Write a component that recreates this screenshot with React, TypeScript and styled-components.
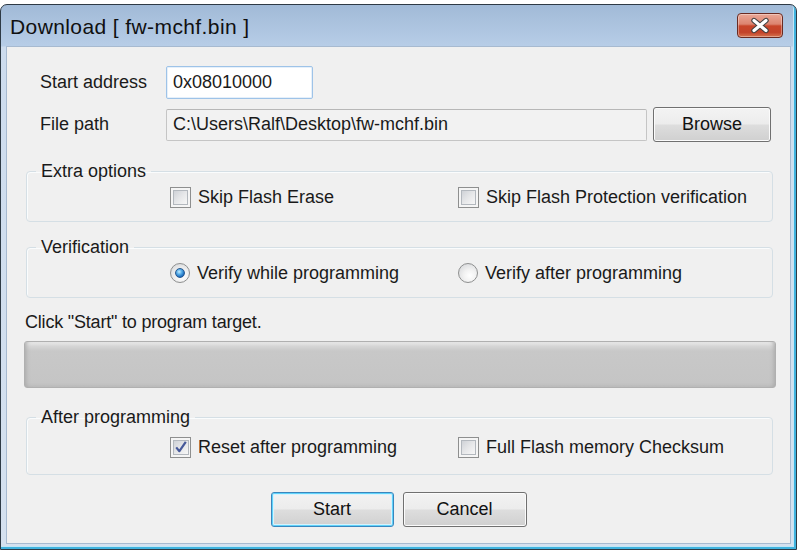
import React from "react";
import styled, { createGlobalStyle, css } from "styled-components";

const Global = createGlobalStyle`
  html, body { margin: 0; padding: 0; background: #ffffff; }
  body { font-family: "Liberation Sans", Arial, sans-serif; color: #1a1a1a; }
  * { box-sizing: border-box; }
`;

const Stage = styled.div`
  width: 800px;
  height: 551px;
  padding: 4px 3px 1px 0;
  display: flex;
`;

const Window = styled.div`
  flex: 1;
  display: flex;
  flex-direction: column;
  border: 1px solid #2e3a45;
  border-radius: 7px 7px 0 0;
  background: linear-gradient(180deg, #a1bad7 0px, #b7cde7 41px, #cddcee 42px, #d5e1ef 100%);
  box-shadow: inset -2px -2px 0 #3fb2de, inset -3px -3px 0 #c3e6f5;
  padding: 0 5px 5px 5px;
`;

const TitleBar = styled.div`
  height: 41px;
  display: flex;
  align-items: center;
  justify-content: space-between;
  padding: 3px 8px 0 4px;
`;

const TitleText = styled.div`
  font-size: 21px;
  color: #101010;
  letter-spacing: 0.4px;
`;

const CloseButton = styled.div`
  width: 46px;
  height: 25px;
  margin-top: -3px;
  border: 1px solid #6a2b22;
  border-radius: 4px;
  background: linear-gradient(180deg, #eaa796 0%, #dc8470 44%, #c8452a 52%, #c3432a 80%, #d6744f 100%);
  box-shadow: inset 0 0 0 1px rgba(255, 255, 255, 0.35);
  display: flex;
  align-items: center;
  justify-content: center;
`;

const Panel = styled.div`
  flex: 1;
  display: flex;
  flex-direction: column;
  background: #f0f0f0;
  border: 1px solid #a7bad0;
  padding-top: 19px;
`;

const FormRow = styled.div<{ $mt?: number }>`
  display: flex;
  align-items: center;
  padding-left: 33px;
  margin-top: ${(p) => p.$mt ?? 0}px;
  height: ${(p) => (p.$mt ? 35 : 33)}px;
`;

const FieldLabel = styled.div`
  width: 126px;
  font-size: 18px;
`;

const TextInput = styled.div<{ $readOnly?: boolean; $width: number }>`
  width: ${(p) => p.$width}px;
  height: ${(p) => (p.$readOnly ? 32 : 33)}px;
  border-radius: 2px;
  font-size: 18px;
  padding-left: 6px;
  display: flex;
  align-items: center;
  white-space: nowrap;
  ${(p) =>
    p.$readOnly
      ? css`
          background: #f2f2f2;
          border: 1px solid #c5c5c5;
          border-top-color: #b7b7b7;
        `
      : css`
          background: #ffffff;
          border: 1px solid #9ec3e8;
          box-shadow: inset 0 0 0 1px #e6f0fa;
        `}
`;

const PushButton = styled.div<{ $width: number; $default?: boolean }>`
  width: ${(p) => p.$width}px;
  height: 35px;
  border: 1px solid ${(p) => (p.$default ? "#3a86bd" : "#707070")};
  border-radius: 3px;
  background: linear-gradient(180deg, #f3f3f3 0%, #ececec 48%, #dddddd 52%, #d0d0d0 100%);
  box-shadow: ${(p) =>
    p.$default ? "inset 0 0 0 1px #5fd3fb, inset 0 0 0 2px #d7f2fd" : "inset 0 0 0 1px #fbfbfb"};
  font-size: 18px;
  color: #111;
  display: flex;
  align-items: center;
  justify-content: center;
`;

const BrowseButton = styled(PushButton)`
  margin-left: 6px;
`;

const Group = styled.fieldset<{ $pt: number; $pb: number; $mt: number }>`
  margin: ${(p) => p.$mt}px 17px 0 19px;
  padding: ${(p) => p.$pt}px 0 ${(p) => p.$pb}px 0;
  border: 1px solid #d5dfe5;
  border-radius: 4px;
  box-shadow: inset 1px 1px 0 #fafcfd;
  min-width: 0;
`;

const GroupLegend = styled.legend`
  margin-left: 9px;
  padding: 0 5px;
  font-size: 18px;
  line-height: 18px;
  color: #1a1a1a;
`;

const OptionGrid = styled.div`
  display: grid;
  grid-template-columns: 288px auto;
  padding-left: 143px;
  height: 22px;
  align-items: center;
`;

const Option = styled.label`
  display: flex;
  align-items: center;
  gap: 7px;
  font-size: 18px;
  white-space: nowrap;
`;

const CheckOuter = styled.span`
  width: 21px;
  height: 21px;
  border: 1px solid #8e8f8f;
  background: #f5f5f5;
  padding: 2px;
  display: flex;
`;

const CheckInner = styled.span`
  flex: 1;
  border: 1px solid #b3b8be;
  background: linear-gradient(135deg, #cfd2d7 0%, #e6e7e9 50%, #f7f7f7 100%);
  display: flex;
  align-items: center;
  justify-content: center;
`;

const RadioOuter = styled.span`
  width: 20px;
  height: 20px;
  border-radius: 50%;
  border: 1px solid #8e8f8f;
  background: radial-gradient(circle at 60% 65%, #ffffff 0%, #f1f1f1 40%, #cfd1d4 100%);
  display: flex;
  align-items: center;
  justify-content: center;
`;

const RadioDot = styled.span`
  width: 10px;
  height: 10px;
  border-radius: 50%;
  border: 1px solid #27588f;
  background: radial-gradient(circle at 40% 35%, #c7ecff 0%, #58aee8 35%, #1f6fbf 70%, #124c8e 100%);
`;

const Status = styled.div`
  margin: 14px 0 0 18px;
  height: 20px;
  line-height: 20px;
  font-size: 18px;
  letter-spacing: -0.2px;
`;

const Progress = styled.div`
  margin: 9px 0 0 17px;
  width: 752px;
  height: 47px;
  border: 1px solid #b0b0b0;
  border-radius: 3px;
  background: linear-gradient(180deg, #ececec 0px, #d6d6d6 4px, #c8c8c8 9px, #c5c5c5 90%, #bdbdbd 100%);
  box-shadow: inset 4px 0 4px -3px #a8a8a8, inset -4px 0 4px -3px #a8a8a8;
`;

const ButtonRow = styled.div`
  margin-top: 17px;
  display: flex;
  justify-content: center;
  gap: 9px;
`;

function Checkbox({ checked }: { checked?: boolean }) {
  return (
    <CheckOuter>
      <CheckInner>
        {checked && (
          <svg width="14" height="14" viewBox="0 0 14 14">
            <path d="M2.2 7.4 L5.4 11.2 L11.8 1.8" fill="none" stroke="#46599a" strokeWidth="2.2" strokeLinejoin="round" />
          </svg>
        )}
      </CheckInner>
    </CheckOuter>
  );
}

function Radio({ checked }: { checked?: boolean }) {
  return <RadioOuter>{checked && <RadioDot />}</RadioOuter>;
}

export default function App() {
  return (
    <>
      <Global />
      <Stage>
        <Window>
          <TitleBar>
            <TitleText>Download [ fw-mchf.bin ]</TitleText>
            <CloseButton>
              <svg width="22" height="17" viewBox="0 0 22 17">
                <path d="M5 3.5 L17 13.5 M17 3.5 L5 13.5" stroke="#404040" strokeWidth="5.4" strokeLinecap="round" />
                <path d="M5 3.5 L17 13.5 M17 3.5 L5 13.5" stroke="#ffffff" strokeWidth="3.2" strokeLinecap="round" />
              </svg>
            </CloseButton>
          </TitleBar>
          <Panel>
            <FormRow>
              <FieldLabel>Start address</FieldLabel>
              <TextInput $width={147}>0x08010000</TextInput>
            </FormRow>
            <FormRow $mt={8}>
              <FieldLabel>File path</FieldLabel>
              <TextInput $readOnly $width={481}>C:\Users\Ralf\Desktop\fw-mchf.bin</TextInput>
              <BrowseButton $width={118}>Browse</BrowseButton>
            </FormRow>

            <Group $mt={20} $pt={6} $pb={13}>
              <GroupLegend>Extra options</GroupLegend>
              <OptionGrid>
                <Option>
                  <Checkbox />
                  Skip Flash Erase
                </Option>
                <Option>
                  <Checkbox />
                  Skip Flash Protection verification
                </Option>
              </OptionGrid>
            </Group>

            <Group $mt={16} $pt={6} $pb={13}>
              <GroupLegend>Verification</GroupLegend>
              <OptionGrid>
                <Option>
                  <Radio checked />
                  Verify while programming
                </Option>
                <Option>
                  <Radio />
                  Verify after programming
                </Option>
              </OptionGrid>
            </Group>

            <Status>Click "Start" to program target.</Status>
            <Progress />

            <Group $mt={20} $pt={10} $pb={16}>
              <GroupLegend>After programming</GroupLegend>
              <OptionGrid>
                <Option>
                  <Checkbox checked />
                  Reset after programming
                </Option>
                <Option>
                  <Checkbox />
                  Full Flash memory Checksum
                </Option>
              </OptionGrid>
            </Group>

            <ButtonRow>
              <PushButton $width={123} $default>
                Start
              </PushButton>
              <PushButton $width={124}>Cancel</PushButton>
            </ButtonRow>
          </Panel>
        </Window>
      </Stage>
    </>
  );
}
